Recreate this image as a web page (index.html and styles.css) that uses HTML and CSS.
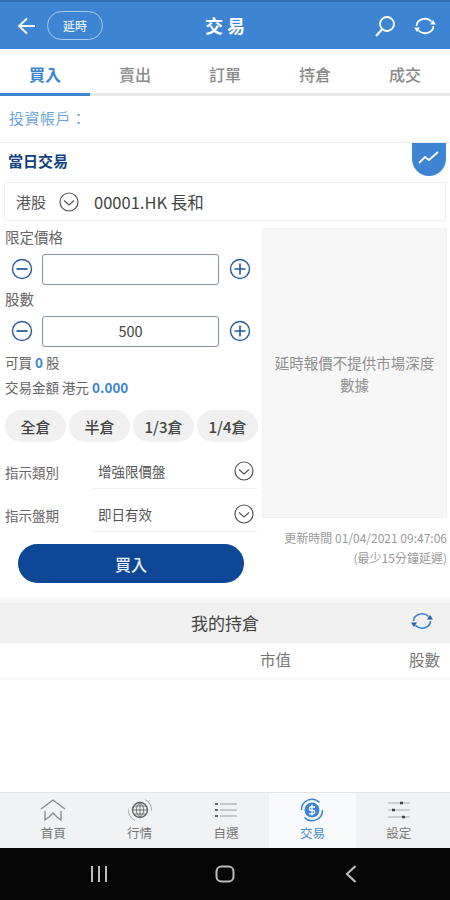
FILE: index.html
```html
<!DOCTYPE html>
<html lang="zh-Hant">
<head>
<meta charset="utf-8">
<title>交易</title>
<link rel="stylesheet" href="styles.css">
</head>
<body>
<div class="app">
  <header class="topbar">
    <svg class="back" width="20" height="20" viewBox="0 0 20 20"><path d="M18 10H2M10 2.500L2 10l8 7.500" fill="none" stroke="#fff" stroke-width="1.800"/></svg>
    <span class="delay">延時</span>
    <h1 class="title">交 易</h1>
    <svg class="search" width="22" height="24" viewBox="0 0 22 24"><circle cx="13" cy="10" r="7" fill="none" stroke="#fff" stroke-width="1.800"/><path d="M8 15.500L2 22" stroke="#fff" stroke-width="2" fill="none"/></svg>
    <svg class="refresh" width="24" height="24" viewBox="0 0 24 24"><path d="M3.500 12a8.500 7.500 0 0 1 15-4.500" fill="none" stroke="#fff" stroke-width="1.800"/><path d="M17 10.500h6l-3-4.500zM1 13.500h6l-3 4.500z" fill="#fff"/><path d="M20.500 12a8.500 7.500 0 0 1-15 4.500" fill="none" stroke="#fff" stroke-width="1.800"/></svg>
  </header>

  <nav class="tabs">
    <span class="tab tab-on">買入</span>
    <span class="tab">賣出</span>
    <span class="tab">訂單</span>
    <span class="tab">持倉</span>
    <span class="tab">成交</span>
  </nav>

  <div class="account">投資帳戶：</div>

  <section class="daytrade">
    <h2 class="daytitle">當日交易</h2>
    <span class="chartbadge">
      <svg width="22" height="14" viewBox="0 0 22 14"><path d="M1 12l6-6 4 3 9-8" fill="none" stroke="#fff" stroke-width="1.800"/></svg>
    </span>
  </section>

  <div class="stock">
    <span class="market">港股</span>
    <svg class="chev-big" width="20" height="20" viewBox="0 0 20 20"><circle cx="10" cy="10" r="9" fill="none" stroke="#555" stroke-width="1.200"/><path d="M5 8.500l5 4.500 5-4.500" fill="none" stroke="#555" stroke-width="1.200"/></svg>
    <span class="code">00001.HK 長和</span>
  </div>

  <div class="columns">
    <div class="form">
      <div class="label">限定價格</div>
      <div class="stepper">
        <svg class="step" width="22" height="22" viewBox="0 0 22 22"><circle cx="11" cy="11" r="9.500" fill="none" stroke="#2a5a98" stroke-width="1.400"/><path d="M5.500 11h11" stroke="#2a5a98" stroke-width="1.800"/></svg>
        <div class="field"></div>
        <svg class="step" width="22" height="22" viewBox="0 0 22 22"><circle cx="11" cy="11" r="9.500" fill="none" stroke="#2a5a98" stroke-width="1.400"/><path d="M5.500 11h11M11 5.500v11" stroke="#2a5a98" stroke-width="1.600"/></svg>
      </div>
      <div class="label">股數</div>
      <div class="stepper">
        <svg class="step" width="22" height="22" viewBox="0 0 22 22"><circle cx="11" cy="11" r="9.500" fill="none" stroke="#2a5a98" stroke-width="1.400"/><path d="M5.500 11h11" stroke="#2a5a98" stroke-width="1.800"/></svg>
        <div class="field">500</div>
        <svg class="step" width="22" height="22" viewBox="0 0 22 22"><circle cx="11" cy="11" r="9.500" fill="none" stroke="#2a5a98" stroke-width="1.400"/><path d="M5.500 11h11M11 5.500v11" stroke="#2a5a98" stroke-width="1.600"/></svg>
      </div>
      <div class="avail">可買 <b class="num">0</b> 股</div>
      <div class="amount">交易金額 港元 <b class="num">0.000</b></div>
      <div class="ratios">
        <span class="ratio">全倉</span>
        <span class="ratio">半倉</span>
        <span class="ratio">1/3倉</span>
        <span class="ratio">1/4倉</span>
      </div>
      <div class="select select-first">
        <span class="selname">指示類別</span>
        <span class="selval">增強限價盤
          <svg width="20" height="20" viewBox="0 0 20 20"><circle cx="10" cy="10" r="9" fill="none" stroke="#555" stroke-width="1.200"/><path d="M5 8.500l5 4.500 5-4.500" fill="none" stroke="#555" stroke-width="1.200"/></svg>
        </span>
      </div>
      <div class="select">
        <span class="selname">指示盤期</span>
        <span class="selval">即日有效
          <svg width="20" height="20" viewBox="0 0 20 20"><circle cx="10" cy="10" r="9" fill="none" stroke="#555" stroke-width="1.200"/><path d="M5 8.500l5 4.500 5-4.500" fill="none" stroke="#555" stroke-width="1.200"/></svg>
        </span>
      </div>
    </div>
    <aside class="depth">
      <div class="depthbox">延時報價不提供市場深度數據</div>
      <div class="stamp">更新時間 01/04/2021 09:47:06<br>(最少15分鐘延遲)</div>
    </aside>
  </div>

  <button class="buy">買入</button>

  <section class="holdings">
    <div class="holdhead">
      <span class="holdtitle">我的持倉</span>
      <svg class="holdrefresh" width="24" height="24" viewBox="0 0 24 24"><path d="M3.500 12a8.500 7.500 0 0 1 15-4.500" fill="none" stroke="#3d85d3" stroke-width="1.700"/><path d="M17 10.500h6l-3-4.500zM1 13.500h6l-3 4.500z" fill="#1f5fa8"/><path d="M20.500 12a8.500 7.500 0 0 1-15 4.500" fill="none" stroke="#3d85d3" stroke-width="1.700"/></svg>
    </div>
    <div class="holdcols"><span class="colval">市值</span><span class="colqty">股數</span></div>
  </section>

  <footer class="bottomnav">
    <div class="navitem">
      <svg width="28" height="26" viewBox="0 0 28 26"><path d="M2 12L14 3l12 9M6 14v9l4-3 4-4 4 4 4 3v-9" fill="none" stroke="#888" stroke-width="1.300"/></svg>
      <span>首頁</span>
    </div>
    <div class="navitem">
      <svg width="28" height="26" viewBox="0 0 28 26"><circle cx="14" cy="13" r="7.500" fill="none" stroke="#666" stroke-width="1.400"/><path d="M6.500 13h15M14 5.500v15M8 9h12M8 17h12M14 5.500c-5 5-5 10 0 15M14 5.500c5 5 5 10 0 15" fill="none" stroke="#666" stroke-width="0.900"/><path d="M19 2.500a12 12 0 0 1 6.500 11M9 23.500a12 12 0 0 1-6.500-11" fill="none" stroke="#aaa"/></svg>
      <span>行情</span>
    </div>
    <div class="navitem">
      <svg width="28" height="26" viewBox="0 0 28 26"><path d="M8 7h17M8 13h17M8 19h17" stroke="#999" stroke-width="1.200"/><path d="M3 7h3M3 13h3M3 19h3" stroke="#666" stroke-width="2"/></svg>
      <span>自選</span>
    </div>
    <div class="navitem nav-on">
      <svg width="28" height="26" viewBox="0 0 28 26"><circle cx="14" cy="13" r="7.500" fill="#3d85d3"/><path d="M17 10h-4a1.700 1.700 0 0 0 0 3.400h2a1.700 1.700 0 0 1 0 3.400h-4M14 7.500v11" fill="none" stroke="#fff" stroke-width="1.300"/><path d="M3.500 13a10.500 10.500 0 0 1 18-7.500M24.500 13a10.500 10.500 0 0 1-18 7.500" fill="none" stroke="#3d85d3" stroke-width="1.500"/></svg>
      <span>交易</span>
    </div>
    <div class="navitem">
      <svg width="28" height="26" viewBox="0 0 28 26"><path d="M3 6h22M3 13h22M3 20h22" stroke="#aaa" stroke-width="1"/><path d="M15 6h3M7 13h3M17 20h3" stroke="#444" stroke-width="2.500"/></svg>
      <span>設定</span>
    </div>
  </footer>

  <div class="sysbar">
    <svg width="20" height="18" viewBox="0 0 20 18"><path d="M3 1v16M10 1v16M17 1v16" stroke="#bbb" stroke-width="2"/></svg>
    <svg width="20" height="18" viewBox="0 0 20 18"><rect x="1.500" y="1.500" width="17" height="15" rx="5" fill="none" stroke="#bbb" stroke-width="2"/></svg>
    <svg width="14" height="20" viewBox="0 0 14 20"><path d="M11.500 2L3 10l8.500 8" fill="none" stroke="#bbb" stroke-width="2.200"/></svg>
  </div>
</div>
</body>
</html>
```
FILE: styles.css
```css
* { box-sizing: border-box; }
html, body { margin: 0; padding: 0; }
body { background: #fff; font-family: "Noto Sans CJK TC", "Noto Sans", sans-serif; color: #444; }
.app { width: 450px; height: 900px; display: flex; flex-direction: column; overflow: hidden; }

.topbar { height: 49px; flex: none; background: #3d85d3; border-top: 2px solid #2f6db5; display: flex; align-items: center; padding: 0 13px 0 17px; position: relative; }
.delay { margin-left: 10px; width: 56px; height: 29px; border: 1.500px solid #a9cbee; border-radius: 15px; color: #e4eefa; font-size: 12px; font-weight: 500; display: flex; align-items: center; justify-content: center; }
.title { position: absolute; left: 0; right: 0; top: 5px; margin: 0; text-align: center; color: #fff; font-size: 18px; line-height: 36px; font-weight: 700; }
.search { margin-left: auto; }
.refresh { margin-left: 17px; }

.tabs { height: 47px; flex: none; display: flex; border-bottom: 3px solid #e8e8e8; margin-bottom: -1px; }
.tab { flex: 1; display: flex; align-items: center; justify-content: center; font-size: 16px; color: #8a8a8a; margin-bottom: -3px; padding-top: 5px; border-bottom: 3px solid transparent; font-weight: 500; }
.tab-on { color: #3d85d3; font-weight: 700; border-bottom-color: #3d85d3; }

.account { height: 48px; flex: none; padding-left: 9px; font-size: 15px; line-height: 46px; color: #6ea3dd; border-bottom: 1px solid #f0f0f0; letter-spacing: 0.500px; }

.daytrade { height: 39px; flex: none; display: flex; align-items: center; padding: 0 0 4px 8px; position: relative; }
.daytitle { margin: 0; font-size: 15px; font-weight: 700; color: #123f7d; }
.chartbadge { position: absolute; right: 4px; top: 0; width: 34px; height: 33px; background: #3d85d3; border-radius: 0 0 17px 17px; display: flex; align-items: center; justify-content: center; padding-bottom: 4px; }

.stock { height: 39px; flex: none; margin: 0 4px; border: 1px solid #f0f0f0; display: flex; align-items: center; padding-left: 11px; font-size: 15px; color: #555; }
.chev-big { margin-left: 13px; }
.code { margin-left: 15px; color: #444; font-size: 16.500px; }

.columns { display: flex; flex: none; height: 323px; padding-top: 6px; }
.form { width: 258px; flex: none; }
.label { font-size: 14.500px; line-height: 20px; color: #666; padding-left: 5px; }
.stepper { display: flex; align-items: center; height: 32px; padding-left: 11px; margin: 6px 0 4px; }
.field { width: 177px; height: 31px; margin: 0 10px 0 9px; border: 1.500px solid #8193ad; border-radius: 3px; text-align: center; font-size: 14.500px; line-height: 28px; color: #444; }
.step { flex: none; }
.avail, .amount { font-size: 13.500px; padding-left: 5px; color: #666; line-height: 20px; }
.avail { margin-top: 5px; }
.amount { margin-top: 5px; }
.num { color: #3d85d3; font-weight: 700; font-size: 13.500px; }
.ratios { display: flex; gap: 3px; padding-left: 5px; margin-top: 13px; }
.ratio { width: 61px; height: 32px; border-radius: 16px; background: #f0f0f0; display: flex; align-items: center; justify-content: center; font-size: 15px; color: #444; font-weight: 500; }
.select { display: flex; height: 43px; align-items: stretch; }
.select-first { margin-top: 4px; }
.selname { width: 93px; flex: none; padding: 8px 0 0 5px; font-size: 13.500px; color: #666; display: flex; align-items: center; }
.selval { flex: 1; margin-right: 1px; padding: 8px 3px 0 5px; display: flex; align-items: center; justify-content: space-between; font-size: 13.500px; color: #555; border-bottom: 1px solid #efefef; }

.depth { flex: 1; padding: 0 3px 0 4px; }
.depthbox { height: 290px; margin-top: 1px; background: #f7f7f7; border: 1px solid #f2f2f2; padding: 123px 10px 0; text-align: center; font-size: 14.500px; line-height: 22px; color: #8f8f8f; }
.stamp { margin-top: 10px; font-size: 12px; line-height: 20px; text-align: right; color: #9a9a9a; white-space: nowrap; }

.buy { flex: none; display: block; width: 226px; height: 39px; margin: 0 0 0 18px; border: 0; border-radius: 20px; background: #0f4797; color: #e8eef8; font: 500 16px "Noto Sans CJK TC", sans-serif; }

.holdings { flex: 1; margin-top: 15px; border-top: 5px solid #f5f5f5; }
.holdhead { height: 40px; background: #f0f0f0; display: flex; align-items: center; justify-content: center; position: relative; font-size: 17px; color: #444; padding-bottom: 2px; }
.holdrefresh { position: absolute; right: 16px; top: 6px; }
.holdcols { height: 37px; border-bottom: 2px solid #f5f5f5; display: flex; align-items: center; justify-content: flex-end; font-size: 15.500px; color: #777; padding: 0 10px 3px 0; }
.colval { margin-right: 118px; }

.bottomnav { height: 56px; flex: none; background: #f1f2f3; border-top: 1px solid #e2e2e2; display: flex; padding: 0 8px 0 10px; }
.navitem { flex: 1; display: flex; flex-direction: column; align-items: center; font-size: 12.500px; line-height: 14px; color: #777; padding-top: 4px; }
.navitem span { margin-top: 3px; }
.nav-on { background: #f8f9fa; color: #4a8ad4; }

.sysbar { height: 52px; flex: none; background: #050505; display: grid; grid-template-columns: 198px 54px 198px; align-items: center; justify-items: center; }
```
